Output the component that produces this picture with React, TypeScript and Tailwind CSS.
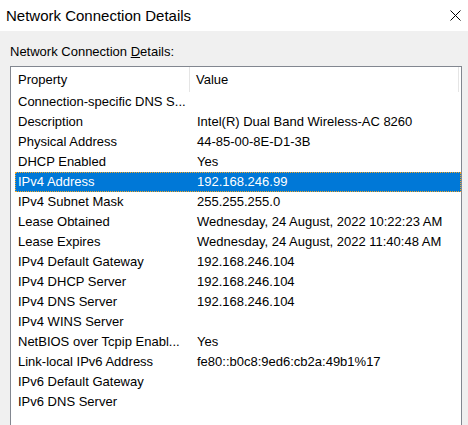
const rows: [string, string][] = [
  ["Connection-specific DNS S...", ""],
  ["Description", "Intel(R) Dual Band Wireless-AC 8260"],
  ["Physical Address", "44-85-00-8E-D1-3B"],
  ["DHCP Enabled", "Yes"],
  ["IPv4 Address", "192.168.246.99"],
  ["IPv4 Subnet Mask", "255.255.255.0"],
  ["Lease Obtained", "Wednesday, 24 August, 2022 10:22:23 AM"],
  ["Lease Expires", "Wednesday, 24 August, 2022 11:40:48 AM"],
  ["IPv4 Default Gateway", "192.168.246.104"],
  ["IPv4 DHCP Server", "192.168.246.104"],
  ["IPv4 DNS Server", "192.168.246.104"],
  ["IPv4 WINS Server", ""],
  ["NetBIOS over Tcpip Enabl...", "Yes"],
  ["Link-local IPv6 Address", "fe80::b0c8:9ed6:cb2a:49b1%17"],
  ["IPv6 Default Gateway", ""],
  ["IPv6 DNS Server", ""],
];

const SELECTED = 4;

export default function App() {
  return (
    <div
      className="w-[468px] h-[425px] overflow-hidden bg-[#f0f0f0] text-black"
      style={{ fontFamily: '"Liberation Sans", Arial, sans-serif' }}
    >
      {/* Title bar */}
      <div className="h-[31px] bg-white flex items-center justify-between pl-[6px] pr-[6px]">
        <span className="text-[15px] leading-none">Network Connection Details</span>
        <svg width="11" height="11" viewBox="0 0 11 11" className="mr-[1px]">
          <path d="M0.5 0.5 L10.5 10.5 M10.5 0.5 L0.5 10.5" stroke="#000" strokeWidth="1" />
        </svg>
      </div>

      <div className="pl-[10px] pt-[13px]">
        <div className="text-[13px] leading-[16px] pb-[6px]">
          Network Connection <span className="underline">D</span>etails:
        </div>

        {/* List view */}
        <div className="w-[452px] h-[400px] border border-[#828790] bg-white">
          <div className="flex h-[25px] items-center text-[13px]">
            <div className="w-[179px] h-full flex items-center pl-[7px] border-r border-[#e5e5e5]">Property</div>
            <div className="w-[269px] h-full flex items-center pl-[6px] border-r border-[#e5e5e5]">Value</div>
          </div>
          {rows.map(([k, v], i) => {
            const sel = i === SELECTED;
            return (
              <div
                key={k}
                className={
                  sel
                    ? "ml-[4px] h-[20px] flex items-center text-[13px] bg-[#0078d7] text-white outline-1 outline-dotted outline-[#f5a623] -outline-offset-1"
                    : "ml-[4px] h-[20px] flex items-center text-[13px]"
                }
              >
                <div className="w-[179px] pl-[3px] whitespace-nowrap">{k}</div>
                <div className="pl-[3px] whitespace-nowrap">{v}</div>
              </div>
            );
          })}
        </div>
      </div>
    </div>
  );
}
